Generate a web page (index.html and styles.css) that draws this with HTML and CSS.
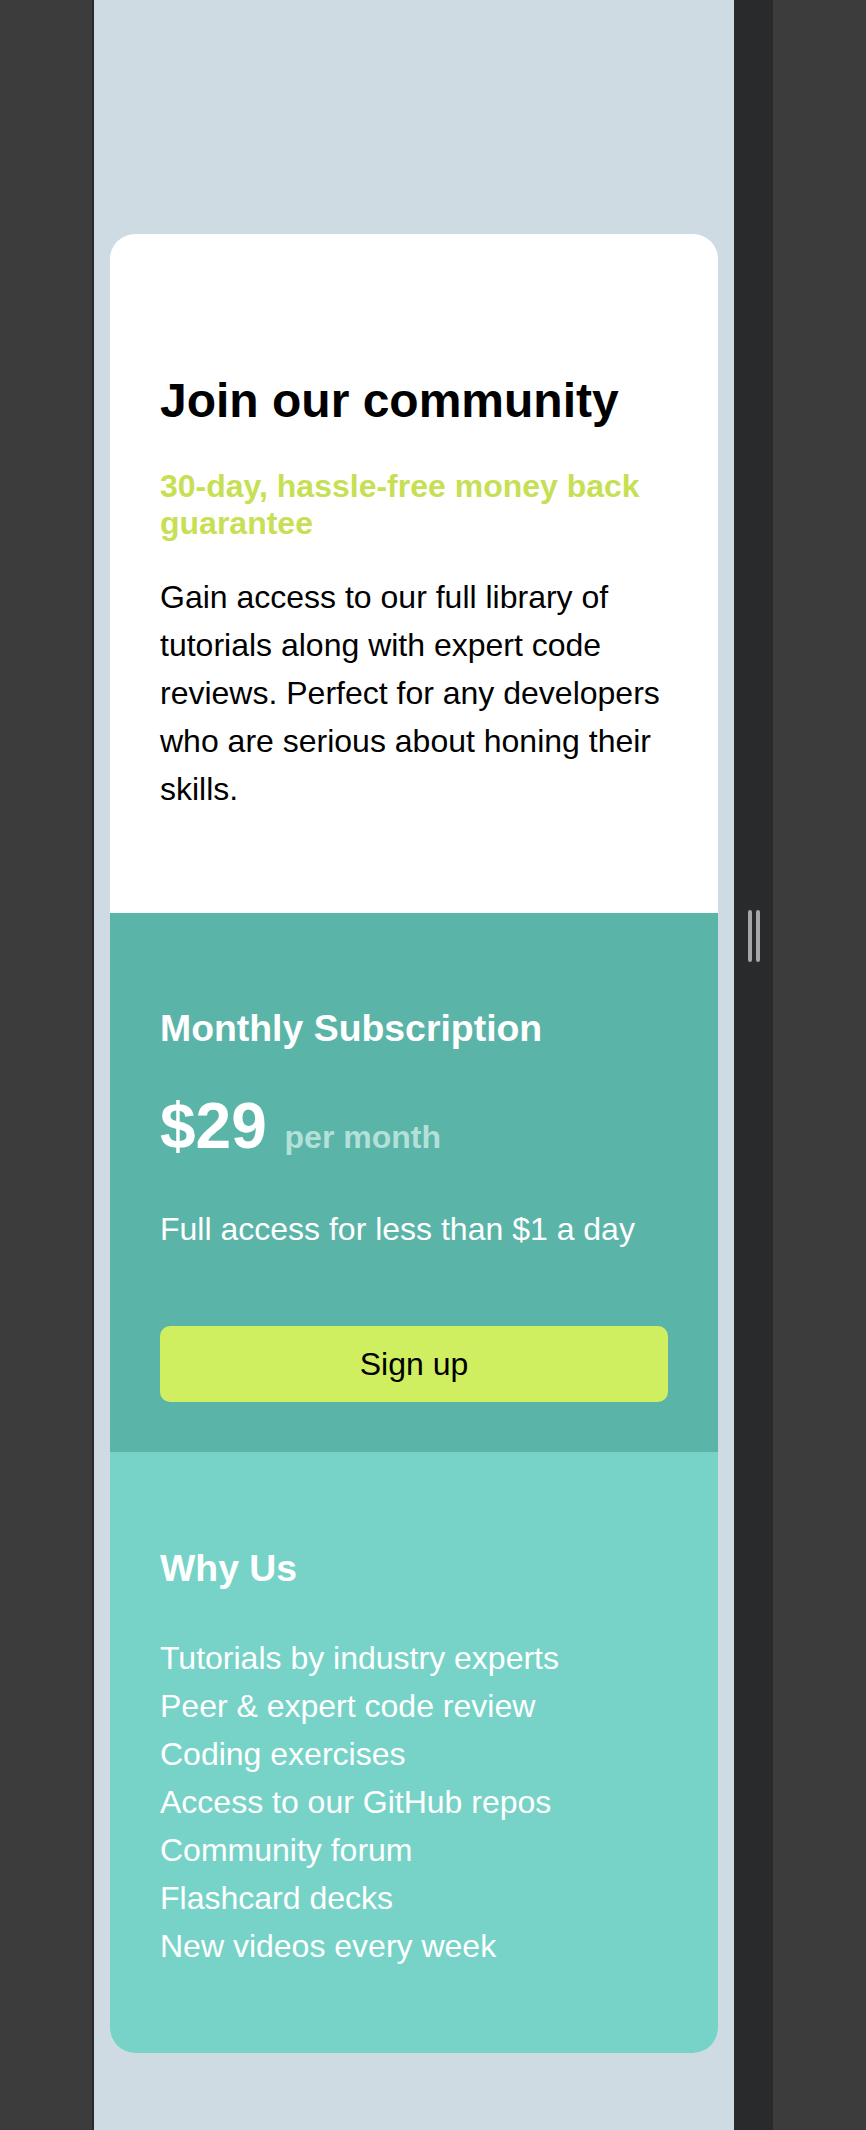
FILE: index.html
```html
<!DOCTYPE html>
<html lang="en">
<head>
<meta charset="utf-8">
<title>Join our community</title>
<link rel="stylesheet" href="styles.css">
</head>
<body>
<div class="frame">
  <div class="gutter gutter-left"></div>
  <div class="edge"></div>
  <main class="viewport">
    <article class="card">
      <section class="intro">
        <h1 class="intro-title">Join our community</h1>
        <h2 class="intro-sub">30-day, hassle-free money back guarantee</h2>
        <p class="intro-text">Gain access to our full library of tutorials along with expert code reviews. Perfect for any developers who are serious about honing their skills.</p>
      </section>
      <section class="pricing">
        <h2 class="section-title">Monthly Subscription</h2>
        <p class="price">$29 <span class="price-period">per month</span></p>
        <p class="price-note">Full access for less than $1 a day</p>
        <button class="signup" type="button">Sign up</button>
      </section>
      <section class="why">
        <h2 class="section-title">Why Us</h2>
        <ul class="why-list">
          <li>Tutorials by industry experts</li>
          <li>Peer &amp; expert code review</li>
          <li>Coding exercises</li>
          <li>Access to our GitHub repos</li>
          <li>Community forum</li>
          <li>Flashcard decks</li>
          <li>New videos every week</li>
        </ul>
      </section>
    </article>
  </main>
  <div class="strip">
    <div class="grip"><span class="grip-bar"></span><span class="grip-bar"></span></div>
  </div>
  <div class="gutter gutter-right"></div>
</div>
</body>
</html>
```

FILE: styles.css
```css
* {
  box-sizing: border-box;
}

html, body {
  margin: 0;
  padding: 0;
}

body {
  background: #3c3c3c;
  font-family: "Liberation Sans", Arial, sans-serif;
}

.frame {
  display: flex;
  min-height: 2130px;
}

.gutter {
  background: #3c3c3c;
}

.gutter-left {
  width: 92px;
  flex: none;
}

.gutter-right {
  flex: 1;
}

.edge {
  width: 2px;
  flex: none;
  background: #2a2a2a;
}

.viewport {
  width: 640px;
  flex: none;
  background: #cfdbe3;
  padding: 234px 16px 0;
}

.strip {
  width: 39px;
  flex: none;
  background: #292a2c;
  display: flex;
  flex-direction: column;
  align-items: center;
  padding-top: 910px;
}

.grip {
  display: flex;
  gap: 4px;
  padding-left: 1px;
}

.grip-bar {
  display: block;
  width: 4px;
  height: 52px;
  border-radius: 2px;
  background: #a6a6a6;
}

.card {
  background: #ffffff;
  border-radius: 25px;
  overflow: hidden;
}

.intro {
  padding: 139px 50px 100px;
}

.intro-title {
  margin: 0;
  font-size: 48px;
  line-height: 1.15;
  font-weight: 700;
  color: #000000;
}

.intro-sub {
  margin: 40px 0 0;
  font-size: 32px;
  line-height: 1.15;
  font-weight: 700;
  color: #c6df54;
}

.intro-text {
  margin: 31px 0 0;
  font-size: 32px;
  line-height: 48px;
  color: #000000;
}

.pricing {
  background: #5bb4a8;
  color: #ffffff;
  padding: 94px 50px 50px;
}

.section-title {
  margin: 0;
  font-size: 37.4px;
  line-height: 43px;
  font-weight: 700;
  color: #ffffff;
}

.price {
  margin: 40px 0 0;
  font-size: 64px;
  line-height: 1.15;
  font-weight: 700;
}

.price-period {
  font-size: 32px;
  color: #b3e0d8;
}

.price-note {
  margin: 48px 0 0;
  font-size: 32px;
  line-height: 1.15;
}

.signup {
  display: block;
  width: 100%;
  height: 76px;
  margin-top: 78px;
  border: none;
  border-radius: 10px;
  background: #d0ef60;
  color: #000000;
  font-family: "Liberation Sans", Arial, sans-serif;
  font-size: 32px;
  cursor: pointer;
}

.why {
  background: #77d3c7;
  color: #ffffff;
  padding: 95px 50px 83px;
}

.why-list {
  list-style: none;
  margin: 44px 0 0;
  padding: 0;
}

.why-list li {
  font-size: 32px;
  line-height: 48px;
}
```
